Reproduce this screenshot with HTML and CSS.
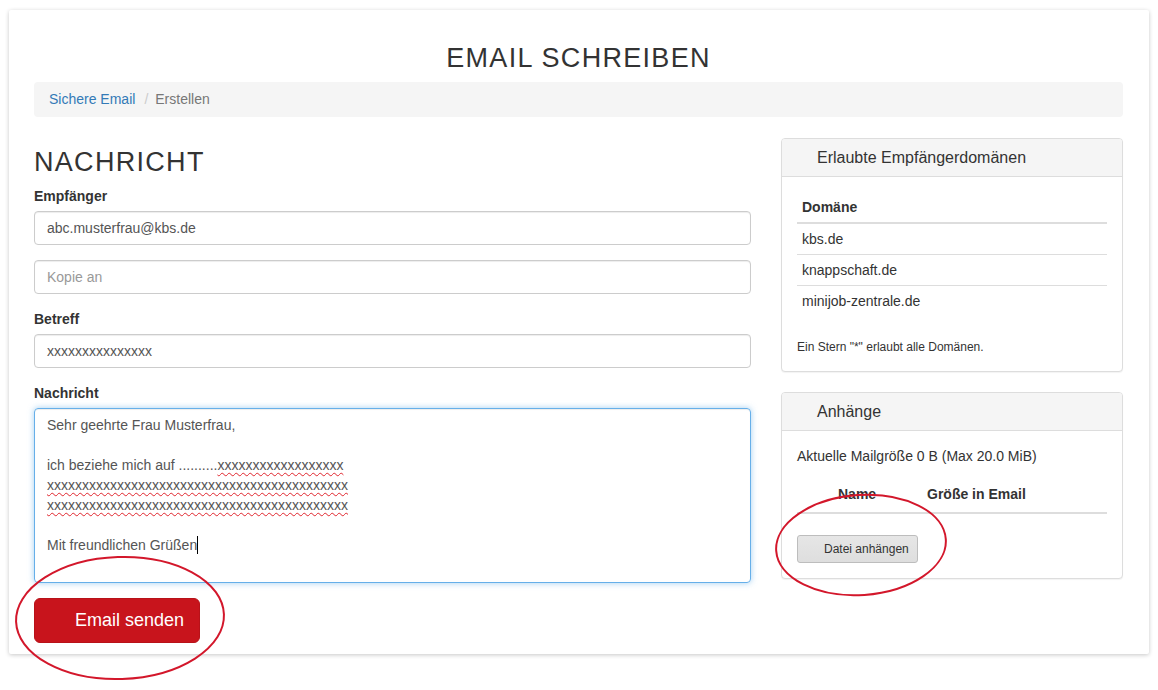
FILE: index.html
```html
<!DOCTYPE html>
<html lang="de">
<head>
<meta charset="utf-8">
<title>Email schreiben</title>
<link rel="stylesheet" href="styles.css">
</head>
<body>
<div class="card">
  <h1 class="title">EMAIL SCHREIBEN</h1>
  <ol class="breadcrumb">
    <li><a href="#">Sichere Email</a></li>
    <li class="sep">/</li>
    <li class="active">Erstellen</li>
  </ol>
  <div class="row">
    <div class="col-main">
      <h3 class="section-title">NACHRICHT</h3>
      <div class="form-group">
        <label class="label">Empfänger</label>
        <div class="input">abc.musterfrau@kbs.de</div>
      </div>
      <div class="form-group">
        <div class="input placeholder">Kopie an</div>
      </div>
      <div class="form-group">
        <label class="label">Betreff</label>
        <div class="input">xxxxxxxxxxxxxxx</div>
      </div>
      <div class="form-group">
        <label class="label">Nachricht</label>
        <div class="textarea">
          <div>Sehr geehrte Frau Musterfrau,</div>
          <div>&nbsp;</div>
          <div>ich beziehe mich auf ..........<span class="spell">xxxxxxxxxxxxxxxxxx</span></div>
          <div><span class="spell">xxxxxxxxxxxxxxxxxxxxxxxxxxxxxxxxxxxxxxxxxxx</span></div>
          <div><span class="spell">xxxxxxxxxxxxxxxxxxxxxxxxxxxxxxxxxxxxxxxxxxx</span></div>
          <div>&nbsp;</div>
          <div>Mit freundlichen Grüßen<span class="caret"></span></div>
        </div>
      </div>
      <button class="btn-send">Email senden</button>
    </div>
    <div class="col-side">
      <div class="panel">
        <div class="panel-heading">Erlaubte Empfängerdomänen</div>
        <div class="panel-body">
          <table class="table table-condensed">
            <thead><tr><th>Domäne</th></tr></thead>
            <tbody>
              <tr><td>kbs.de</td></tr>
              <tr><td>knappschaft.de</td></tr>
              <tr><td>minijob-zentrale.de</td></tr>
            </tbody>
          </table>
          <p class="small-note">Ein Stern "*" erlaubt alle Domänen.</p>
        </div>
      </div>
      <div class="panel">
        <div class="panel-heading">Anhänge</div>
        <div class="panel-body">
          <p class="mailsize">Aktuelle Mailgröße 0 B (Max 20.0 MiB)</p>
          <table class="table table-attach">
            <thead><tr><th class="c-check"></th><th class="c-name">Name</th><th class="c-size">Größe in Email</th><th></th></tr></thead>
            <tbody></tbody>
          </table>
          <button class="btn-attach">Datei anhängen</button>
        </div>
      </div>
    </div>
  </div>
</div>
<svg class="marks" width="1158" height="690" viewBox="0 0 1158 690">
  <ellipse cx="120" cy="618" rx="104" ry="61" transform="rotate(-2 120 618)" fill="none" stroke="#d3172b" stroke-width="2"/>
  <ellipse cx="861" cy="545" rx="85" ry="50" transform="rotate(-4 861 545)" fill="none" stroke="#d3172b" stroke-width="2"/>
</svg>
</body>
</html>
```
FILE: styles.css
```css
* { box-sizing: border-box; }
html, body { margin: 0; padding: 0; background: #fff; }
body {
  font-family: "Liberation Sans", Arial, sans-serif;
  font-size: 14px;
  line-height: 20px;
  color: #333;
  position: relative;
  width: 1158px;
  height: 690px;
  overflow: hidden;
}
.card {
  margin: 10px 0 0 9px;
  width: 1140px;
  padding: 33px 26px 11px 25px;
  background: #fff;
  box-shadow: 0 1px 4px rgba(0,0,0,0.22);
  border-radius: 2px;
}
.title {
  margin: 0;
  text-align: center;
  font-weight: 400;
  font-size: 27px;
  line-height: 30px;
  letter-spacing: 1.3px;
  color: #333;
}
.breadcrumb {
  list-style: none;
  margin: 9px 0 21px 0;
  padding: 8px 15px;
  height: 35px;
  background: #f5f5f5;
  border-radius: 4px;
  display: flex;
  line-height: 19px;
}
.breadcrumb a { color: #337ab7; text-decoration: none; }
.breadcrumb .sep { color: #ccc; padding: 0 7px 0 9px; }
.breadcrumb .active { color: #777; }
.row { display: flex; gap: 30px; }
.col-main { width: 717px; padding-top: 9px; }
.col-side { width: 342px; }
.section-title {
  margin: 0 0 9px 0;
  font-size: 27px;
  line-height: 30px;
  font-weight: 400;
  letter-spacing: 1.3px;
  color: #333;
}
.form-group { margin-bottom: 15px; }
.label {
  display: block;
  font-weight: 700;
  margin-bottom: 5px;
  line-height: 20px;
}
.input {
  height: 34px;
  padding: 6px 12px;
  border: 1px solid #ccc;
  border-radius: 4px;
  color: #555;
  box-shadow: inset 0 1px 1px rgba(0,0,0,0.075);
}
.input.placeholder { color: #999; }
.textarea {
  height: 175px;
  padding: 6px 12px;
  border: 1px solid #66afe9;
  border-radius: 4px;
  color: #555;
  box-shadow: inset 0 1px 1px rgba(0,0,0,0.075), 0 0 6px rgba(102,175,233,0.6);
}
.spell {
  text-decoration: underline wavy #e0262e;
  text-decoration-thickness: 1px;
  text-underline-offset: 2px;
}
.caret {
  display: inline-block;
  width: 1px;
  height: 18px;
  background: #000;
  vertical-align: -4px;
}
.btn-send {
  display: block;
  height: 45px;
  width: 166px;
  padding: 0 10px 0 40px;
  text-align: left;
  white-space: nowrap;
  background: #c8141c;
  border: 1px solid #b81219;
  border-radius: 6px;
  color: #fff;
  font-family: "Liberation Sans", Arial, sans-serif;
  font-size: 18px;
  line-height: 43px;
}
.panel {
  border: 1px solid #ddd;
  border-radius: 4px;
  background: #fff;
  margin-bottom: 20px;
  box-shadow: 0 1px 1px rgba(0,0,0,0.05);
}
.panel-heading {
  background: #f5f5f5;
  border-bottom: 1px solid #ddd;
  border-radius: 3px 3px 0 0;
  padding: 10px 15px 10px 35px;
  font-size: 16px;
  line-height: 17px;
  height: 38px;
  color: #333;
}
.panel-body { padding: 15px; }
.table {
  width: 100%;
  border-collapse: collapse;
  margin-bottom: 20px;
}
.table th { text-align: left; font-weight: 700; }
.table-condensed th, .table-condensed td {
  padding: 5px;
  line-height: 20px;
}
.table-condensed thead th { border-bottom: 2px solid #ddd; }
.table-condensed tbody td { border-top: 1px solid #ddd; }
.table-condensed tbody tr:first-child td { border-top: 0; }
.small-note {
  margin: 23px 0 0 0;
  font-size: 12px;
  line-height: 17px;
}
.table-condensed { margin-bottom: 0; }
.mailsize { margin: 0 0 10px 0; }
.table-attach { margin-bottom: 21px; }
.table-attach th {
  padding: 8px;
  line-height: 20px;
  border-bottom: 2px solid #ddd;
}
.table-attach .c-check { width: 33px; padding: 0; }
.table-attach .c-name { width: 89px; }
.table-attach .c-size { width: 120px; }
.btn-attach {
  display: block;
  height: 28px;
  width: 121px;
  padding: 0 6px 0 26px;
  text-align: left;
  white-space: nowrap;
  background: linear-gradient(#e6e6e6, #dedede);
  border: 1px solid #bdbdbd;
  border-radius: 3px;
  color: #333;
  font-family: "Liberation Sans", Arial, sans-serif;
  font-size: 12px;
  line-height: 26px;
}
.marks {
  position: absolute;
  left: 0;
  top: 0;
  pointer-events: none;
}
```
